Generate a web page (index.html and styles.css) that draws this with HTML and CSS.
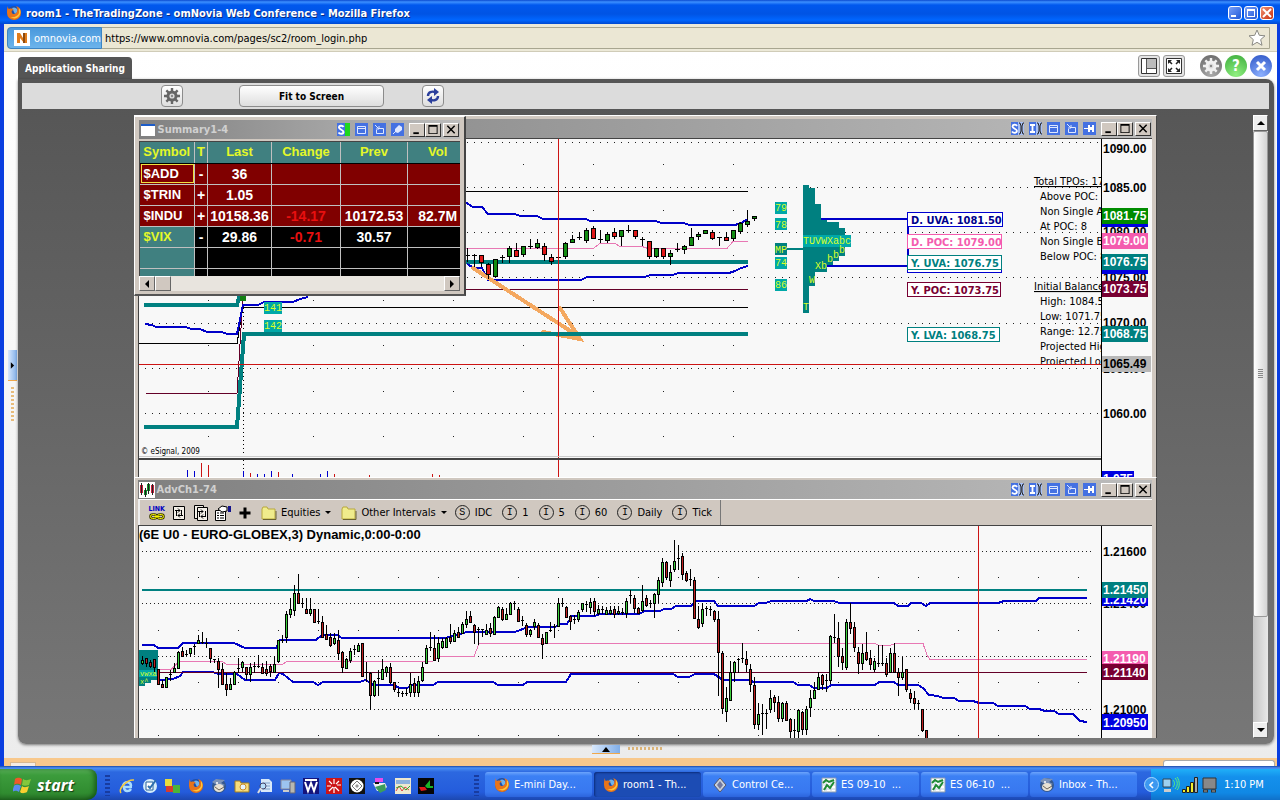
FILE: index.html
```html
<!DOCTYPE html>
<html lang="en">
<head>
    <meta charset="UTF-8">
    <meta name="viewport" content="width=device-width, initial-scale=1.0">
    <title>room1 - TheTradingZone - omNovia Web Conference</title>
    <link rel="stylesheet" href="styles.css">
</head>
<body>
    <!-- shared icons -->
    <svg class="defs" aria-hidden="true">
        <symbol id="i-firefox" viewBox="0 0 16 16">
            <circle cx="8" cy="8" r="7" fill="#1f4fa8"/>
            <path d="M6 3a4 4 0 0 1 5 1 4 4 0 0 1-2 5z" fill="#6fb4ee"/>
            <path d="M2 1c0 2 0 2 1 3 2-1 4 0 5 1-2 0-3 1-2 3 1 2 4 1 5-1 1-3 0-5-1-6 3 1 5 3 5 7a7 7 0 0 1-14 0c0-3 0-5 1-7z" fill="#e8741a"/>
            <path d="M13 3c2 2 2 6 0 8-2 3-6 3-9 1 4 1 8-1 9-4z" fill="#ffc83a"/>
        </symbol>
        <symbol id="i-gear" viewBox="0 0 16 16">
            <g fill="currentColor">
                <circle cx="8" cy="8" r="5.5"/>
                <path d="M6.8 0h2.4v16H6.8zM0 6.8h16v2.4H0zM1.5 3.2l1.7-1.7 11.3 11.3-1.7 1.7zM12.8 1.5l1.7 1.7L3.2 14.5l-1.7-1.7z"/>
            </g>
            <circle cx="8" cy="8" r="2.6" fill="#ddd"/>
            <circle cx="8" cy="8" r="1.2" fill="#888"/>
        </symbol>
        <symbol id="i-chart" viewBox="0 0 16 16">
            <path d="M1 1h14v14H1z" fill="#fff" stroke="#8a9ab0"/>
            <path d="M1 4h14M1 8h14M1 12h14M5 1v14M10 1v14" stroke="#c4d0dc"/>
            <path d="M2 6l3-3 3 2 5-2M3 13l3-5 3 3 4-6" fill="none" stroke="#1d8a34" stroke-width="2"/>
        </symbol>
        <symbol id="i-bird" viewBox="0 0 16 16">
            <circle cx="8" cy="8" r="7" fill="#35588e"/>
            <path d="M1 4l4-3 9 1-4 3 4 2-5 2z" fill="#7c93b8"/>
            <ellipse cx="8" cy="10" rx="5" ry="4" fill="#e8e2d4"/>
            <path d="M4 9l4 3 5-3" fill="none" stroke="#6c655a"/>
            <circle cx="6" cy="5" r="1" fill="#fff"/>
        </symbol>
        <symbol id="w-s" viewBox="0 0 13 13">
            <path d="M0 0h13v13H0z" fill="#a8c0f4"/>
            <path d="M0 0h7v13H0z" fill="#4471e2"/>
            <path d="M6 4C5 2 1.500 2.500 1.500 4.500S6 7 6 9 2.500 11.500 1 9.500" fill="none" stroke="#fff" stroke-width="1.800"/>
            <path d="M8 1h1l1 3v5l-1 3H8M13 1h-1l-1 3v5l1 3h1" fill="none" stroke="#222"/>
        </symbol>
        <symbol id="w-i" viewBox="0 0 13 13">
            <path d="M0 0h13v13H0z" fill="#a8c0f4"/>
            <path d="M0 0h7v13H0z" fill="#4471e2"/>
            <path d="M1 3h5M1 10h5M3.500 3v7" fill="none" stroke="#fff" stroke-width="1.800"/>
            <path d="M8 1h1l1 3v5l-1 3H8M13 1h-1l-1 3v5l1 3h1" fill="none" stroke="#222"/>
        </symbol>
        <symbol id="w-sg" viewBox="0 0 13 13">
            <path d="M0 0h8v13H0z" fill="#4471e2"/>
            <path d="M6.500 4C5.500 2 2 2.500 2 4.500S6.500 7 6.500 9 3 11.500 1.500 9.500" fill="none" stroke="#fff" stroke-width="2"/>
            <path d="M8 0h5v13H8z" fill="#1ed61e"/>
        </symbol>
        <symbol id="w-box" viewBox="0 0 13 13">
            <path d="M0 0h13v13H0z" fill="#4471e2"/>
            <path d="M2.500 3.500h8v7h-8z" fill="none" stroke="#dfe8ff"/>
            <path d="M2 5.500h9" stroke="#dfe8ff"/>
        </symbol>
        <symbol id="w-pop" viewBox="0 0 13 13">
            <path d="M0 0h13v13H0z" fill="#4471e2"/>
            <path d="M5 5.500h5.500v5h-7V7M2 2l4 4M6 3v3H3" fill="none" stroke="#dfe8ff"/>
        </symbol>
        <symbol id="w-pin" viewBox="0 0 13 13">
            <path d="M0 0h13v13H0z" fill="#4471e2"/>
            <path d="M1 6.500h5" stroke="#fff"/>
            <path d="M5 3h2v2h2V3h2v7H9V8H7v2H5z" fill="#fff"/>
        </symbol>
        <symbol id="w-pin2" viewBox="0 0 13 13">
            <path d="M0 0h13v13H0z" fill="#4471e2"/>
            <path d="M2 11l3-3" stroke="#dfe8ff"/>
            <path d="M4 6l4-4 3 2v3l-4 3-3-1z" fill="#dfe8ff"/>
        </symbol>
        <symbol id="w-min" viewBox="0 0 12 12"><path d="M2 9h6v2H2z"/></symbol>
        <symbol id="w-max" viewBox="0 0 12 12"><path d="M1 1h10v10H1zM2 3v7h8V3z" fill-rule="evenodd"/></symbol>
        <symbol id="w-close" viewBox="0 0 12 12"><path d="M2 2l8 8M10 2l-8 8" stroke="#000" stroke-width="1.600"/></symbol>
        <symbol id="i-folder" viewBox="0 0 16 14">
            <path d="M1 3l1-2h4l1 2h7v10H1z" fill="#f0ec8c" stroke="#b8a83c"/>
            <path d="M2 13.500h13V5" fill="none" stroke="#6a6230"/>
        </symbol>
    </svg>

    <div class="browser">
        <header class="titlebar">
            <svg class="ico16"><use href="#i-firefox"/></svg>
            <h1>room1 - TheTradingZone - omNovia Web Conference - Mozilla Firefox</h1>
            <div class="xp-buttons">
                <button type="button" aria-label="Minimize"><svg viewBox="0 0 10 10"><path d="M1 7h5v2H1z"/></svg></button>
                <button type="button" aria-label="Maximize"><svg viewBox="0 0 10 10"><path d="M1 1h8v8H1zM2 3v5h6V3z" fill-rule="evenodd"/></svg></button>
                <button type="button" class="close" aria-label="Close"><svg viewBox="0 0 10 10"><path d="M1 1l8 8M9 1L1 9" stroke="#fff" stroke-width="2"/></svg></button>
            </div>
        </header>

        <div class="addressbar">
            <div class="url-box">
                <span class="site-id">
                    <svg viewBox="0 0 16 16"><path d="M0 0h16v16H0z" fill="#fff"/><path d="M3 13V3h3l3 5V3h4v10h-3L6 8v5z" fill="#e07c1c"/><path d="M9 3h2v10H9z" fill="#8c4a10"/></svg>
                    omnovia.com
                </span>
                <input type="text" class="url" aria-label="Address" value="https://www.omnovia.com/pages/sc2/room_login.php">
                <svg class="star" viewBox="0 0 18 18"><path d="M9 1l2.300 5.300 5.700.500-4.300 3.800 1.300 5.700L9 13.300l-5 3 1.300-5.700L1 6.800l5.700-.500z" fill="#fff" stroke="#8a8a84"/></svg>
            </div>
        </div>

        <main class="room">
            <div class="room-head">
                <span class="tab">Application Sharing</span>
                <div class="room-tools">
                    <button type="button" class="sq" aria-label="Layout"><svg viewBox="0 0 16 16"><path d="M.500.500h15v15H.500z" fill="#fff" stroke="#333"/><path d="M6 1h9v9H6z" fill="#bbb"/><path d="M5.500 1v14M6 10.500h9" stroke="#555"/></svg></button>
                    <button type="button" class="sq" aria-label="Full screen"><svg viewBox="0 0 16 16"><path d="M.500.500h15v15H.500z" fill="#fff" stroke="#333"/><path d="M2 2h4L2 6zM14 2h-4l4 4zM2 14h4l-4-4zM14 14h-4l4-4z" fill="#222"/><path d="M3 3l3 3M13 3l-3 3M3 13l3-3M13 13l-3-3" stroke="#222" stroke-width="1.500"/></svg></button>
                    <button type="button" class="round gray" aria-label="Settings"><svg viewBox="0 0 16 16"><use href="#i-gear"/></svg></button>
                    <button type="button" class="round green" aria-label="Help">?</button>
                    <button type="button" class="round blue" aria-label="Exit"><svg viewBox="0 0 16 16"><path d="M4 4l8 8M12 4l-8 8" stroke="#fff" stroke-width="3"/></svg></button>
                </div>
            </div>

            <div class="side-split">
                <button type="button" aria-label="Expand sidebar"><svg viewBox="0 0 6 8"><path d="M1 0l4 4-4 4z"/></svg></button>
                <i></i>
            </div>

            <section class="panel">
                <div class="share-bar">
                    <button type="button" class="small" aria-label="Sharing options"><svg viewBox="0 0 16 16"><use href="#i-gear"/></svg></button>
                    <button type="button" class="fit">Fit to Screen</button>
                    <button type="button" class="small" aria-label="Refresh"><svg viewBox="0 0 16 16" fill="none" stroke="#2b3f9c" stroke-width="2.400"><path d="M3 8c0-4 4-5 7-4M13 8c0 4-4 5-7 4"/><path d="M9 0l5 4-5 4zM7 16l-5-4 5-4z" fill="#2b3f9c" stroke="none"/></svg></button>
                </div>

                <div class="share-area">
                    <div class="desktop">
                        <article class="win win-main">
                            <div class="win-title">
                                <span class="win-name"></span>
                                <span class="win-icons">
                                    <svg><use href="#w-s"/></svg><svg><use href="#w-i"/></svg><svg><use href="#w-box"/></svg><svg><use href="#w-pop"/></svg><svg><use href="#w-pin"/></svg>
                                </span>
                                <span class="win-ctl">
                                    <button type="button" aria-label="Minimize"><svg><use href="#w-min"/></svg></button><button type="button" aria-label="Maximize"><svg><use href="#w-max"/></svg></button><button type="button" aria-label="Close"><svg><use href="#w-close"/></svg></button>
                                </span>
                            </div>
                            <svg class="chart" viewBox="139 139 1013 338" width="1013" height="338">
                                <g class="dots" id="grid-es"></g>
                                <path class="vdots" d="M243.500 296v181"/>
                                <g class="note" clip-path="url(#note-clip)">
                                    <text x="1034" y="185" text-decoration="underline">Total TPOs: 178</text>
                                    <text x="1040" y="200">Above POC: 83</text>
                                    <text x="1040" y="215">Non Single Above: 70</text>
                                    <text x="1040" y="230">At POC: 8</text>
                                    <text x="1040" y="245">Non Single Below: 75</text>
                                    <text x="1040" y="260">Below POC: 87</text>
                                    <text x="1034" y="290" text-decoration="underline">Initial Balance</text>
                                    <text x="1040" y="305">High: 1084.50</text>
                                    <text x="1040" y="320">Low: 1071.75</text>
                                    <text x="1040" y="335">Range: 12.75</text>
                                    <text x="1040" y="350">Projected High</text>
                                    <text x="1040" y="365">Projected Low</text>
                                </g>
                                <clipPath id="note-clip"><path d="M1000 139h101v225h-101z"/></clipPath>
                                <path class="ln black" d="M465 191.500h283M139 343.500h98l6-36h505"/>
                                <path class="ln maroon" d="M465 289.500h283M146 393.500h91l6-98"/>
                                <path class="ln pink" d="M465 248.500H593L600 243.500H615L620 246.500H642L648 248.500H727L733 241.500H748"/>
                                <path class="ln teal4" d="M144 305h93l4-15M465 262h283M144 427h93l7-93h504"/>
                                <path class="ln blue" d="M145 324L152 325 156 327H185L192 329H200L207 332H222L227 334H237L243 305H258L264 302H293L300 299 308 297"/>
                                <path class="ln blue" d="M465 202L473 207H482L488 214H515L520 216H537L543 219H586L590 221H656L661 223H684L689 225H735L741 223 748 219"/>
                                <path class="ln blue" d="M467 264L474 268H482L488 280H581L587 277H645L650 275H673L678 273H729L735 271 741 268 748 266"/>
                                <path class="arrow" d="M473 268L575 334M560 308L580 339 543 332"/>
                                <path class="ln teal4" d="M540 334h60"/>
                                <path d="M240 290h6v11h-6z" fill="#128012"/>
                                <g id="candles-es"></g>
                                <path class="ln red" d="M139 364.500h962M558.500 139v338"/>

                                <g class="tpo">
                                    <path d="M775 202h12v12h-12zM775 218h12v12h-12zM775 257h12v12h-12zM775 279h12v12h-12zM264 302h18v12h-18zM264 320h18v12h-18z" fill="#00a8a8"/>
                                    <path d="M775 243h12v12h-12zM787 248h16v2h-16z" fill="#008080"/>
                                    <path d="M803 185H809V188H815V204H821V219H827V222H839V228H845V256H839V261H833V267H827V272H815V286H809V313H803z" fill="#008080"/>
                                    <path d="M803 235h48v12h-48z" fill="#00a8a8"/>
                                    <text x="775" y="211">79</text><text x="775" y="228">78</text><text x="775" y="253">MP</text>
                                    <text x="775" y="266">74</text><text x="775" y="288">86</text>
                                    <text x="264" y="311">141</text><text x="264" y="329">142</text>
                                    <text x="803" y="244">TUVWXabc</text>
                                    <text x="839" y="253">b</text><text x="833" y="258">b</text><text x="827" y="262">b</text>
                                    <text x="815" y="269">Xb</text><text x="809" y="283">W</text><text x="803" y="310">T</text>
                                </g>

                                <path class="ln blue" d="M821 219H908V273M827 266H908"/>
                                <g class="level">
                                    <path d="M907.500 258.500h94v14h-94z" stroke="#0000d0"/>
                                    <path d="M907.500 212.500h95v14h-95z" stroke="#0000d0"/><text x="911" y="224" fill="#00008c">D. UVA: 1081.50</text>
                                    <path d="M907.500 234.500h94v14h-94z" stroke="#f45cae"/><text x="911" y="246" fill="#f45cae">D. POC: 1079.00</text>
                                    <path d="M907.500 255.500h94v14h-94z" stroke="#008080"/><text x="911" y="267" fill="#008080">Y. UVA: 1076.75</text>
                                    <path d="M907.500 282.500h93v14h-93z" stroke="#780032"/><text x="911" y="294" fill="#780032">Y. POC: 1073.75</text>
                                    <path d="M907.500 327.500h92v14h-92z" stroke="#008080"/><text x="911" y="339" fill="#008080">Y. LVA: 1068.75</text>
                                </g>

                                <text class="copy" x="141" y="454">© eSignal, 2009</text>
                                <path d="M139 456.500h962" stroke="#ccc"/>
                                <path d="M139 459h962" stroke="#444" stroke-width="2"/>
                                <path class="ln red" d="M201.500 463v14M208.500 465v12M250.500 473v4M278.500 472v5M334.500 474v3M369.500 475v2M432.500 474v3M439.500 475v2"/>
                                <path d="M187.500 470v7M194.500 471v6M243.500 471v6M257.500 474v3M264.500 474v3M271.500 471v6M292.500 474v3M320.500 474v3M327.500 471v6" stroke="#0000d0"/>

                                <path d="M1101.500 139v338" stroke="#000"/>
                                <g class="axis">
                                    <text x="1103" y="153">1090.00</text>
                                    <text x="1103" y="192">1085.00</text>
                                    <text x="1103" y="236">1080.00</text>
                                    <text x="1103" y="282">1075.00</text>
                                    <text x="1103" y="327">1070.00</text>
                                    <text x="1103" y="373">1065.00</text>
                                    <text x="1103" y="418">1060.00</text>
                                    <g class="tag">
                                        <path d="M1102 224h46v3h-46zM1102 268h46v6h-46zM1102 471h32v6h-32z" fill="#0000e0"/>
                                        <path d="M1102 208h46v16h-46z" fill="#008c00"/><text x="1103" y="220">1081.75</text>
                                        <path d="M1102 233h46v16h-46z" fill="#f45cae"/><text x="1103" y="245">1079.00</text>
                                        <path d="M1102 254h46v16h-46z" fill="#008080"/><text x="1103" y="266">1076.75</text>
                                        <path d="M1102 281h46v16h-46z" fill="#780032"/><text x="1103" y="293">1073.75</text>
                                        <path d="M1102 326h46v16h-46z" fill="#008080"/><text x="1103" y="338">1068.75</text>
                                        <text x="1103" y="483">1.075</text>
                                    </g>
                                    <path d="M1102 356h49v16h-49z" fill="#b8b8b8"/><text x="1103" y="368">1065.49</text>
                                </g>
                            </svg>
                        </article>

                        <article class="win win-adv">
                            <div class="win-title">
                                <svg class="app" viewBox="0 0 16 16"><path d="M0 0h16v16H0z" fill="#fff"/><path d="M1 3h3v8H1zM12 3h3v8h-3z" fill="#c81e3c"/><path d="M5 8h3v5H5zM8 2h3v7H8z" fill="#118a2a"/><path d="M2.500 1v12M6.500 6v9M9.500 1v11M13.500 2v11" stroke="#222"/></svg>
                                <span class="win-name">AdvCh1-74</span>
                                <span class="win-icons">
                                    <svg><use href="#w-s"/></svg><svg><use href="#w-i"/></svg><svg><use href="#w-box"/></svg><svg><use href="#w-pop"/></svg><svg><use href="#w-pin"/></svg>
                                </span>
                                <span class="win-ctl">
                                    <button type="button" aria-label="Minimize"><svg><use href="#w-min"/></svg></button><button type="button" aria-label="Maximize"><svg><use href="#w-max"/></svg></button><button type="button" aria-label="Close"><svg><use href="#w-close"/></svg></button>
                                </span>
                            </div>
                            <div class="chart-tools">
                                <button type="button" class="link-btn"><b>LINK</b><svg viewBox="0 0 16 7" fill="none"><g stroke="#3c3c00" stroke-width="2.600"><rect x="1.500" y="1.500" width="6" height="4" rx="2"/><rect x="8.500" y="1.500" width="6" height="4" rx="2"/></g><g stroke="#f4f000"><rect x="1.500" y="1.500" width="6" height="4" rx="2"/><rect x="8.500" y="1.500" width="6" height="4" rx="2"/><path d="M5 3.500h6"/></g></svg></button>
                                <button type="button" aria-label="Swap symbol"><svg viewBox="0 0 16 16" fill="none" stroke="#000"><path d="M2.500 1.500h11v13h-11z" fill="#f4f0e8"/><path d="M4 5.500h5M7 3.500l2 2-2 2M12 10.500H7M9 8.500l-2 2 2 2M5.500 6v5M10.500 5v5"/></svg></button>
                                <button type="button" aria-label="Swap all"><svg viewBox="0 0 16 16" fill="none" stroke="#000"><path d="M1.500.500h9v13h-9z" fill="#f4f0e8"/><path d="M4.500 2.500h10v13h-10z" fill="#f4f0e8"/><path d="M5 6.500h5M8 4.500l2 2-2 2M13 11.500H8M10 9.500l-2 2 2 2M6.500 7v5M12.500 6v5"/></svg></button>
                                <button type="button" aria-label="Properties"><svg viewBox="0 0 16 16"><path d="M.500 5.500h10v10H.500z" fill="#fff" stroke="#000"/><path d="M2 8h2M5 8h4M2 10.500h2M5 10.500h4M2 13h2M5 13h4" stroke="#000"/><path d="M3 4l4-3 5 1v4l-5 1z" fill="#fff" stroke="#000"/><path d="M13 1h3v6h-3z" fill="#14148c"/></svg></button>
                                <button type="button" aria-label="Add"><svg viewBox="0 0 16 16"><path d="M6.500 2.500h3v4h4v3h-4v4h-3v-4h-4v-3h4z"/></svg></button>
                                <button type="button" class="menu"><svg class="fold"><use href="#i-folder"/></svg>Equities<i></i></button>
                                <button type="button" class="menu"><svg class="fold"><use href="#i-folder"/></svg>Other Intervals<i></i></button>
                                <button type="button" class="iv"><em>S</em>IDC</button>
                                <button type="button" class="iv"><em>I</em>1</button>
                                <button type="button" class="iv"><em>I</em>5</button>
                                <button type="button" class="iv"><em>I</em>60</button>
                                <button type="button" class="iv"><em>I</em>Daily</button>
                                <button type="button" class="iv last"><em>I</em>Tick</button>
                            </div>
                            <svg class="chart" viewBox="139 526 1013 212" width="1013" height="212">
                                <g class="dots" id="grid-euro"></g>
                                <path d="M139 650h19v20h-19z" fill="#008080"/>
                                <path d="M139 670h19v7h-19z" fill="#00a8a8"/>
                                <path d="M139 677h19v3h-7v3h-6v3h-6z" fill="#008080"/>
                                <text class="tiny" x="140" y="676">vwxa</text><text class="tiny" x="140" y="684">x^</text>
                                <path class="ln teal2" d="M142 590h945"/>
                                <path class="ln pink" d="M158 669.500H171L179 661.500H222L227 664.500H282L287 661.500H432L440 656.500H474L479 643.500H875L879 645.500H890L895 643.500H923L927 655 930 659.500H1087"/>
                                <path class="ln blue" d="M158 680L173 679 180 676 183 672H213L218 674H237L245 680H275L279 673 283 674 293 682H313L318 685 323 682H360L365 680 369 682 373 685H393L400 688H407L413 685H433L438 682H493L498 685H523L527 682H566L571 674H673L678 677H689L695 674H714L723 680H748L754 682H793L798 685H809L814 688H827L831 685H875L879 682H894L898 685H918L923 688 929 695 938 696 943 698H954L959 701H973L979 703H993L998 706H1025L1030 709H1039L1045 711H1054L1059 714H1073L1080 721 1087 722"/>
                                <path class="ln blue" d="M142 645H154L158 648H178L183 643H234L245 648H276L280 640H316L322 635H337L342 638H445L467 632H515L528 627H555L560 624H567L572 616H595L600 614H639L645 611H660L664 609H671L676 606H691L696 601H714L718 606H754L759 603H766L771 601H807L810 599 814 601H834L839 603H894L898 606H908L911 603H921L926 606 930 603H998L1004 601H1036L1039 598H1087"/>
                                <path class="ln maroon" d="M158 672.500h929"/>
                                <g id="candles-euro"></g>
                                <path class="ln red" d="M978.500 526v212"/>
                                <text class="chart-name" x="139" y="539">(6E U0 - EURO-GLOBEX,3) Dynamic,0:00-0:00</text>
                                <path d="M1101.500 526v212" stroke="#000"/>
                                <g class="axis">
                                    <text x="1103" y="556">1.21600</text>
                                    <text x="1103" y="608">1.21400</text>
                                    <text x="1103" y="714">1.21000</text>
                                    <g class="tag">
                                        <path d="M1102 590h46v16h-46z" fill="#0000e0"/><text x="1103" y="604">1.21420</text>
                                        <path d="M1102 582h46v16h-46z" fill="#008080"/><text x="1103" y="594">1.21450</text>
                                        <path d="M1102 651h46v16h-46z" fill="#f45cae"/><text x="1103" y="663">1.21190</text>
                                        <path d="M1102 664h46v16h-46z" fill="#780032"/><text x="1103" y="677">1.21140</text>
                                        <path d="M1102 714h46v16h-46z" fill="#0000e0"/><text x="1103" y="727">1.20950</text>
                                    </g>
                                </g>
                            </svg>
                        </article>

                        <article class="win summary">
                            <div class="win-title">
                                <svg class="app" viewBox="0 0 16 16"><path d="M1 3h14v11H1z" fill="#fff"/><path d="M1 2h14v2H1z" fill="#1c5cc8"/></svg>
                                <span class="win-name">Summary1-4</span>
                                <span class="win-icons">
                                    <svg><use href="#w-sg"/></svg><svg><use href="#w-box"/></svg><svg><use href="#w-pop"/></svg><svg><use href="#w-pin2"/></svg>
                                </span>
                                <span class="win-ctl">
                                    <button type="button" aria-label="Minimize"><svg><use href="#w-min"/></svg></button><button type="button" aria-label="Maximize"><svg><use href="#w-max"/></svg></button><button type="button" aria-label="Close"><svg><use href="#w-close"/></svg></button>
                                </span>
                            </div>
                            <div class="table-box">
                                <table>
                                    <thead>
                                        <tr><th>Symbol</th><th>T</th><th>Last</th><th>Change</th><th>Prev</th><th>Vol</th></tr>
                                    </thead>
                                    <tbody>
                                        <tr class="hot"><td class="sel">$ADD</td><td>-</td><td>36</td><td></td><td></td><td></td></tr>
                                        <tr class="hot"><td>$TRIN</td><td>+</td><td>1.05</td><td></td><td></td><td></td></tr>
                                        <tr class="hot"><td>$INDU</td><td>+</td><td>10158.36</td><td class="neg">-14.17</td><td>10172.53</td><td>82.7M</td></tr>
                                        <tr><td>$VIX</td><td>-</td><td>29.86</td><td class="neg">-0.71</td><td>30.57</td><td></td></tr>
                                        <tr><td></td><td></td><td></td><td></td><td></td><td></td></tr>
                                        <tr><td></td><td></td><td></td><td></td><td></td><td></td></tr>
                                    </tbody>
                                </table>
                            </div>
                            <div class="hscroll">
                                <button type="button" aria-label="Scroll left"><svg viewBox="0 0 8 8"><path d="M6 0v8L2 4z"/></svg></button>
                                <span class="knob"></span>
                                <button type="button" aria-label="Scroll right"><svg viewBox="0 0 8 8"><path d="M2 0v8l4-4z"/></svg></button>
                            </div>
                        </article>
                    </div>

                    <div class="vscroll">
                        <button type="button" aria-label="Scroll up"><svg viewBox="0 0 8 8"><path d="M0 6h8L4 2z"/></svg></button>
                        <span class="knob"><i></i></span>
                        <button type="button" aria-label="Scroll down"><svg viewBox="0 0 8 8"><path d="M0 2h8L4 6z"/></svg></button>
                    </div>
                </div>
            </section>

            <div class="bottom-split">
                <button type="button" aria-label="Expand panel"><svg viewBox="0 0 8 5"><path d="M0 5h8L4 0z"/></svg></button>
                <i></i>
            </div>
        </main>
        <div class="statusbar"><span class="left-box"></span><span class="right-box"></span></div>
    </div>

    <footer class="taskbar">
        <button type="button" class="start">
            <svg viewBox="0 0 20 18"><path d="M2 3c3-2 5-1 7 0L8 9C6 8 4 7 1 9z" fill="#f0582a"/><path d="M10 3c3 2 5 1 8 0l-2 6c-3 1-5 1-7 0z" fill="#84c83c"/><path d="M1 10c2-2 5-1 7 0l-2 6c-2-1-4-2-7 0z" fill="#5a8cf0"/><path d="M9 10c2 2 5 1 7 0l-2 6c-2 1-5 2-7 0z" fill="#f8d030"/></svg>
            start
        </button>
        <i class="grip"></i>
        <nav class="quick">
            <svg viewBox="0 0 16 16"><path d="M13 9H5c0 5 5 5 7 2M4 8c1-5 8-5 8 0" fill="none" stroke="#a8dcff" stroke-width="2.500"/><path d="M2 15C-1 11 8 1 15 2" fill="none" stroke="#f4c83c" stroke-width="1.500"/></svg>
            <svg viewBox="0 0 16 16"><circle cx="8" cy="8" r="7" fill="#d4ecfa"/><path d="M4 4h7v8H4z" fill="#fff" stroke="#27639c"/><path d="M6 8l2 2 6-8" fill="none" stroke="#2d6fae" stroke-width="2"/></svg>
            <svg viewBox="0 0 16 16"><path d="M0 1h7v7H0z" fill="#e8dc3c"/><path d="M7 0h7v7H7z" fill="#2c62dc"/><path d="M1 8h7v6H1z" fill="#d83c2c"/><path d="M8 7h7v8H8z" fill="#4ab43c"/></svg>
            <svg><use href="#i-firefox"/></svg>
            <svg><use href="#i-bird"/></svg>
            <svg viewBox="0 0 16 16"><path d="M1 3h5l1 2h8v9H1z" fill="#f6dc7c" stroke="#a07c20"/><circle cx="9" cy="9" r="3" fill="#e8f4fc" stroke="#c88c2c"/></svg>
            <svg viewBox="0 0 16 16"><path d="M4 1h8l3 3v10H4z" fill="#d8e8f8"/><path d="M6 5h7M6 8h7M6 11h7" stroke="#7ca0c8"/><circle cx="6" cy="8" r="3" fill="#b8e0fc" stroke="#446"/><path d="M4 10l-3 5" stroke="#ddd" stroke-width="2"/></svg>
            <svg viewBox="0 0 16 16"><path d="M1 2h10v9H1z" fill="#9cc4f0" stroke="#889"/><path d="M10 4h5v11h-5z" fill="#b8b8b0" stroke="#667"/><path d="M3 13h6" stroke="#ccc" stroke-width="2"/></svg>
            <svg viewBox="0 0 16 16"><path d="M0 0h16v16H0z" fill="#14147c"/><path d="M2 4l3 9 3-8 3 8 3-9M2 2h12" fill="none" stroke="#fff" stroke-width="2"/></svg>
            <svg viewBox="0 0 16 16"><path d="M0 0h16v16H0z" fill="#cc1418"/><path d="M8 1v5M8 9v6M1 8h4M11 7h4M3 3l3 3M13 3l-3 3M3 13l4-4M13 13l-4-4" stroke="#fff" stroke-width="1.200"/></svg>
            <svg viewBox="0 0 16 16"><path d="M0 0h16v16H0z" fill="#111"/><circle cx="8" cy="8" r="6.500" fill="#fff"/><path d="M8 3l5 5-5 5-5-5z" fill="none" stroke="#777"/><path d="M8 6l2 2-2 2-2-2z" fill="#999"/></svg>
            <svg viewBox="0 0 16 16"><path d="M3 0h8v4H3z" fill="#e84ce8"/><path d="M1 5h12l2 4-4 4H5z" fill="#f0f0f0"/><path d="M3 9l10-3 1 6-6 3z" fill="#3c9c5c"/><path d="M3 5h4" stroke="#111" stroke-width="2"/></svg>
            <svg viewBox="0 0 16 16"><path d="M0 0h16v16H0z" fill="#eee8d0"/><path d="M1 2h14v4H1z" fill="#8cb0dc"/><path d="M1 13l3-5 3 5 3-4 4 3" stroke="#d44" fill="none"/><path d="M1 10l5-2 5 4 4-4" stroke="#3a3" fill="none"/></svg>
            <svg viewBox="0 0 16 16"><path d="M0 0h16v16H0z" fill="#050505"/><path d="M7 8l5-6v6h3v2H9z" fill="#18b428"/><path d="M1 9h6l2 3-6 1z" fill="#e01818"/></svg>
        </nav>
        <i class="grip"></i>
        <div class="tasks">
            <button type="button"><svg><use href="#i-firefox"/></svg>E-mini Day...</button>
            <button type="button" class="active"><svg><use href="#i-firefox"/></svg>room1 - Th...</button>
            <button type="button"><svg viewBox="0 0 16 16"><path d="M8 1l6 7-6 7-6-7z" fill="#c8d0dc" stroke="#556"/><path d="M8 4l3 4-3 4-3-4z" fill="#7078a0"/></svg>Control Ce...</button>
            <button type="button"><svg><use href="#i-chart"/></svg>ES 09-10 &nbsp;...</button>
            <button type="button"><svg><use href="#i-chart"/></svg>ES 06-10 &nbsp;...</button>
            <button type="button"><svg><use href="#i-bird"/></svg>Inbox - Th...</button>
        </div>
        <div class="tray">
            <button type="button" class="chev" aria-label="Show hidden icons"><svg viewBox="0 0 8 8"><path d="M5 1L2 4l3 3" fill="none" stroke="#fff" stroke-width="1.600"/></svg></button>
            <svg viewBox="0 0 18 18"><path d="M1 3h8v8H1z" fill="#9cd0f0" stroke="#345"/><path d="M2 13h7v3H2z" fill="#ccc"/><path d="M11 4c2 2 2 5 0 7M13 2c3 3 3 8 0 11M15 1c3 4 3 10 0 13" fill="none" stroke="#5cf07c"/></svg>
            <svg viewBox="0 0 18 18" fill="#f4f02c" stroke="#222"><path d="M1.500 13.500h3v3h-3zM5.500 10.500h3v6h-3zM9.500 6.500h3v10h-3z"/><path d="M13.500 1.500h3v15h-3z" fill="#aaa"/></svg>
            <svg viewBox="0 0 18 18"><path d="M3 2h13v11H3z" fill="#888" stroke="#333"/><path d="M3 15h5M11 15h5" stroke="#333" stroke-width="3"/><path d="M4 15h3M12 15h3" stroke="#aaa"/></svg>
            <time>1:10 PM</time>
        </div>
    </footer>

    <script src="chart.js"></script>
</body>
</html>
```

FILE: styles.css
```css
* {
    box-sizing: border-box;
}
body {
    margin: 0;
    height: 100vh;
    display: flex;
    flex-direction: column;
    overflow: hidden;
    background: #fff;
    font-family: "DejaVu Sans Condensed", "DejaVu Sans", Tahoma, sans-serif;
    font-size: 11px;
    color: #000;
}
button {
    font: inherit;
    color: inherit;
    padding: 0;
    margin: 0;
    border: 0;
    background: none;
    display: flex;
    align-items: center;
    justify-content: center;
}
svg {
    display: block;
    flex: none;
}
.defs {
    position: absolute;
    width: 0;
    height: 0;
}
.ico16 {
    width: 16px;
    height: 16px;
}

/* browser frame */
.browser {
    flex: 1;
    min-height: 0;
    display: flex;
    flex-direction: column;
    border: solid #0a3ee0;
    border-width: 0 3px 0 4px;
}
.titlebar {
    height: 24px;
    flex: none;
    display: flex;
    align-items: center;
    gap: 4px;
    margin: 0 -3px 0 -4px;
    padding: 2px 6px 0 6px;
    background: linear-gradient(#0a4ad0 0, #3c90ff 2px, #0058ee 5px, #0054e4 14px, #0066ff 20px, #0048d0 24px);
    color: #fff;
}
.titlebar h1 {
    flex: 1;
    margin: 0;
    font-size: 11px;
    font-weight: bold;
    text-shadow: 1px 1px 0 #0a2a80;
}
.xp-buttons {
    display: flex;
    gap: 2px;
}
.xp-buttons button {
    width: 14px;
    height: 14px;
    border: 1px solid #fff;
    border-radius: 3px;
    background: linear-gradient(135deg, #7aa0f8, #2058d8);
}
.xp-buttons .close {
    background: linear-gradient(135deg, #f09070, #c83010);
}
.xp-buttons svg {
    width: 10px;
    height: 10px;
    fill: #fff;
}
.addressbar {
    flex: none;
    height: 28px;
    padding: 3px 7px 3px 3px;
    background: #ece9d8;
    border-bottom: 1px solid #d0ccb8;
}
.url-box {
    height: 22px;
    display: flex;
    align-items: center;
    border: 1px solid #a8a690;
    border-radius: 4px 0 0 4px;
    background: #ebe7d4;
}
.site-id {
    align-self: stretch;
    width: 95px;
    margin: -1px 0 -1px -1px;
    padding-left: 6px;
    display: flex;
    align-items: center;
    gap: 4px;
    border-radius: 4px 0 0 4px;
    background: linear-gradient(#4a98dc, #6cb4ec);
    border: 1px solid #3c84c4;
    color: #fff;
}
.site-id svg {
    width: 16px;
    height: 16px;
}
.url {
    flex: 1;
    border: 0;
    padding: 0 3px;
    background: none;
    font: inherit;
    outline: 0;
}
.star {
    width: 18px;
    height: 18px;
    margin-right: 3px;
}

/* conference room */
.room {
    flex: 1;
    min-height: 0;
    display: grid;
    grid-template: 27px minmax(0, 1fr) 14px / 14px minmax(0, 1fr);
    padding-right: 3px;
    background: linear-gradient(#fff, #ececec);
}
.room-head {
    grid-column: 2;
    display: flex;
    justify-content: space-between;
    align-items: flex-end;
}
.tab {
    height: 22px;
    line-height: 23px;
    padding: 0 7px;
    border-radius: 4px 4px 0 0;
    background: #555;
    color: #fff;
    font-size: 10px;
    font-weight: bold;
}
.room-tools {
    display: flex;
    gap: 3px;
    padding: 0 2px 2px 0;
}
.room-tools .sq {
    width: 22px;
    height: 22px;
    border: 1px solid #999;
    border-radius: 3px;
    background: #e4e4e4;
}
.sq svg,
.round svg {
    width: 16px;
    height: 16px;
}
.round {
    width: 22px;
    height: 22px;
    border-radius: 50%;
    color: #fff;
    font-size: 15px;
    font-weight: bold;
}
.round.gray {
    margin-left: 12px;
    background: radial-gradient(circle at 50% 90%, #aaa, #666);
    color: #f0f0f0;
}
.round.green {
    background: radial-gradient(circle at 50% 90%, #90f080, #3cac3c);
}
.round.blue {
    background: radial-gradient(circle at 50% 90%, #8cb0ff, #2c54c4);
}
.side-split {
    grid-row: 2;
    grid-column: 1;
    padding: 271px 0 0 4px;
}
.side-split button {
    width: 9px;
    height: 31px;
    background: linear-gradient(90deg, #d8e8fc, #80aee8);
    border-bottom: 1px solid #f0a84c;
}
.side-split svg {
    width: 5px;
    height: 7px;
}
.side-split i {
    display: block;
    width: 3px;
    height: 35px;
    margin: 6px 0 0 3px;
    background: repeating-linear-gradient(#e8bc7c 0 2px, transparent 2px 4px);
}
.bottom-split {
    grid-column: 2;
    display: flex;
    justify-content: center;
    gap: 8px;
    padding: 1px 37px 0 0;
}
.bottom-split button {
    width: 28px;
    height: 9px;
    background: linear-gradient(90deg, #d8e8fc, #80aee8);
    border-bottom: 1px solid #f0a84c;
}
.bottom-split svg {
    width: 8px;
    height: 5px;
}
.bottom-split i {
    width: 35px;
    height: 3px;
    margin-top: 2px;
    background: repeating-linear-gradient(90deg, #dcb478 0 2px, transparent 2px 4px);
}
.panel {
    grid-row: 2;
    grid-column: 2;
    display: flex;
    flex-direction: column;
    padding: 4px 4px 6px;
    border-radius: 0 8px 8px 8px;
    background: linear-gradient(#555, #777);
    box-shadow: 0 1px 3px rgba(0, 0, 0, 0.5);
}
.share-bar {
    flex: none;
    height: 26px;
    display: flex;
    align-items: center;
    padding-left: 139px;
    background: #dcdcdc;
    margin-right: 1px;
}
.share-bar button {
    height: 22px;
    border: 1px solid #8c8c8c;
    border-radius: 4px;
    background: linear-gradient(#fff, #dedede);
    font-size: 10px;
    font-weight: bold;
}
.share-bar .small {
    width: 22px;
    color: #666;
}
.share-bar .fit {
    width: 145px;
    margin: 0 38px 0 56px;
}
.share-bar svg {
    width: 16px;
    height: 16px;
}
.share-area {
    flex: 1;
    min-height: 0;
    display: grid;
    grid-template-columns: 1fr auto 1fr;
    grid-template-rows: minmax(0, 1fr);
    padding-top: 6px;
    margin-right: 2px;
}
.desktop {
    grid-column: 2;
    position: relative;
    overflow: hidden;
}

/* windows of the shared desktop */
.win {
    padding: 3px 4px 0 3px;
    border: 1px solid #fff;
    border-right-color: #444;
    border-bottom: 0;
    background: #d0c8c0;
}
.win-adv {
    padding-top: 2px;
}
.win-title {
    height: 19px;
    display: flex;
    align-items: center;
    padding-right: 1px;
    background: linear-gradient(90deg, #808080, #bcbcbc);
    color: #d0d0d0;
    font-weight: bold;
}
.win-title .app {
    width: 16px;
    height: 16px;
    margin: 0 2px 0 1px;
}
.win-name {
    flex: 1;
}
.win-icons {
    display: flex;
    gap: 5px;
    margin-right: 5px;
}
.win-icons svg {
    width: 13px;
    height: 13px;
}
.win-ctl {
    display: flex;
}
.win-ctl button {
    width: 16px;
    height: 14px;
    border: 1px solid;
    border-color: #fff #333 #333 #fff;
    background: #d0c8c0;
}
.win-ctl button:last-child {
    margin-left: 2px;
}
.win-ctl svg {
    width: 12px;
    height: 11px;
}
.chart {
    box-sizing: content-box;
    border: solid #444;
    border-width: 1px 0 0 1px;
    background: #f8f8f8;
    shape-rendering: crispEdges;
}
.chart-tools {
    height: 26px;
    display: flex;
    align-items: center;
    padding-left: 9px;
    border-top: 1px solid #fff;
    border-left: 2px solid #eee;
}
.chart-tools button {
    margin-right: 6px;
}
.chart-tools svg {
    width: 16px;
    height: 16px;
}
.chart-tools .link-btn {
    flex-direction: column;
}
.link-btn b {
    font-size: 7px;
    line-height: 7px;
    color: #0000c0;
}
.chart-tools .link-btn svg {
    height: 7px;
}
.chart-tools .menu {
    margin: 0 8px 0 2px;
    gap: 4px;
}
.chart-tools .fold {
    height: 14px;
}
.menu i {
    margin-left: 1px;
    border: 3px solid transparent;
    border-top-color: #000;
    border-bottom: 0;
}
.chart-tools .iv {
    gap: 5px;
    margin-right: 10px;
}
.iv em {
    width: 15px;
    height: 15px;
    border: 1px solid #222;
    border-radius: 50%;
    font: 10px/13px "Liberation Mono", monospace;
    text-align: center;
}
.chart-tools .last {
    align-self: stretch;
    margin: 0;
    padding-right: 8px;
    border-right: 1px solid #777;
}

/* chart drawing */
.dots path {
    stroke: #222;
}
.vdots {
    stroke: #000;
    stroke-dasharray: 1 3;
}
.ln {
    fill: none;
    stroke-width: 1;
}
.black { stroke: #000; }
.red { stroke: #cc1414; }
.maroon { stroke: #640028; }
.pink { stroke: #e878b4; }
.blue.ln { stroke: #0000c8; stroke-width: 2; }
.teal2 { stroke: #008080; stroke-width: 2; }
.teal4 { stroke: #008080; stroke-width: 4; }
.arrow {
    fill: none;
    stroke: #f4a860;
    stroke-width: 4;
    stroke-linecap: round;
}
.candle-up { fill: #128c12; stroke: #000; }
.candle-down { fill: #e01818; stroke: #000; }
.euro .candle-up { fill: #3cd03c; }
.euro .candle-down { fill: #c02020; }
.wick { stroke: #000; fill: none; }
.note {
    font-size: 11px;
}
.tpo text,
.tiny {
    font-family: "Liberation Mono", monospace;
    font-size: 10px;
    fill: #d8ff28;
}
.tiny {
    font-size: 7px;
}
.level path {
    fill: #fff;
}
.level text {
    font-size: 11px;
    font-weight: bold;
}
.copy {
    font-size: 8px;
}
.axis text,
.chart-name {
    font-family: "Liberation Sans", Arial, sans-serif;
    font-size: 12px;
    font-weight: bold;
}
.chart-name {
    font-size: 13px;
}
.axis .tag text {
    fill: #fff;
}

/* quote summary */
.summary {
    position: absolute;
    top: 1px;
    left: 0;
    width: 332px;
    height: 180px;
    padding: 3px 4px 4px 4px;
    border-bottom: 2px solid #555;
    border-right-width: 2px;
}
.table-box {
    height: 135px;
    overflow: hidden;
    margin-top: 2px;
    border: solid #444;
    border-width: 1px 0 0 1px;
    background: #000;
}
.summary table {
    width: 329px;
    table-layout: fixed;
    border-collapse: collapse;
    font-family: "Liberation Sans", Arial, sans-serif;
    font-size: 14px;
    font-weight: bold;
    color: #fff;
    background: #000;
}
.summary th,
.summary td {
    height: 21px;
    padding: 0;
    border: solid #c0c0c0;
    border-width: 0 1px 1px 0;
    text-align: center;
    line-height: 18px;
    white-space: nowrap;
}
.summary th {
    border-bottom-color: #000;
    background: #408080;
    color: #e4f828;
    font-size: 13px;
}
.summary th:nth-child(1) { width: 55px; }
.summary th:nth-child(2) { width: 13px; }
.summary th:nth-child(3) { width: 64px; }
.summary th:nth-child(4) { width: 69px; }
.summary th:nth-child(5) { width: 67px; }
.summary td:first-child {
    padding-left: 4px;
    text-align: left;
    background: #408080;
    color: #e4f828;
    font-size: 13px;
}
.summary .hot td {
    background: #800000;
}
.summary .hot td:first-child {
    color: #fff;
}
.summary .sel {
    outline: 1px solid #f0e040;
    outline-offset: -2px;
}
.summary .neg {
    color: #e81010;
}
.hscroll {
    height: 15px;
    display: flex;
    background: #e8e4de;
}
.hscroll button,
.hscroll .knob,
.vscroll button {
    width: 16px;
    border: 1px solid;
    border-color: #fff #666 #666 #fff;
    background: #d0c8c0;
}
.hscroll button:last-child {
    margin-left: auto;
}
.hscroll svg,
.vscroll svg {
    width: 8px;
    height: 8px;
}
.vscroll {
    grid-column: 3;
    justify-self: end;
    width: 15px;
    display: flex;
    flex-direction: column;
    background: linear-gradient(90deg, #c4c4c4, #e8e8e8);
}
.vscroll button {
    width: 15px;
    height: 16px;
    background: #eee;
}
.vscroll .knob {
    flex: 0 0 78%;
    margin-bottom: auto;
    display: flex;
    align-items: center;
    justify-content: center;
    border: 1px solid #999;
    border-radius: 2px;
    background: linear-gradient(90deg, #fff, #d4d4d4);
}
.vscroll i {
    width: 5px;
    height: 9px;
    background: repeating-linear-gradient(#888 0 1px, transparent 1px 2px);
}
.statusbar {
    flex: none;
    height: 8px;
    display: flex;
    justify-content: space-between;
    align-items: flex-end;
    padding: 0 2px 0 6px;
    background: #f8c88c;
}
.left-box {
    width: 26px;
    height: 4px;
    background: #f4ece4;
    border: 1px solid #d8b890;
    border-bottom: 0;
}
.right-box {
    width: 112px;
    height: 6px;
    background: #fff;
    border: 1px solid #aaa;
    border-bottom: 0;
    border-radius: 3px 3px 0 0;
}

/* taskbar */
.taskbar {
    flex: none;
    height: 34px;
    display: flex;
    align-items: stretch;
    padding-top: 3px;
    background: linear-gradient(#1c48a8 0, #4c90f4 2px, #2c68e0 6px, #245cdc 26px, #1c48b0 34px);
    color: #fff;
}
.start {
    width: 97px;
    gap: 4px;
    margin-right: 8px;
    padding-right: 10px;
    border-radius: 0 8px 10px 0;
    background: linear-gradient(#5cb45c 0, #3c9c3c 6px, #308c30 24px, #246c24);
    box-shadow: inset -3px 0 4px rgba(0, 50, 0, 0.5);
    font: italic bold 16px "Noto Sans", sans-serif;
    text-shadow: 1px 1px 1px #143c14;
}
.start svg {
    width: 20px;
    height: 18px;
}
.grip {
    width: 5px;
    margin: 6px 0 4px;
    background: repeating-linear-gradient(#183ca0 0 2px, transparent 2px 4px);
}
.quick {
    width: 364px;
    display: flex;
    align-items: center;
    gap: 7px;
    padding: 2px 0 0 9px;
}
.quick svg,
.tasks svg {
    width: 16px;
    height: 16px;
}
.tasks {
    display: flex;
    gap: 2px;
    padding: 3px 0 3px 6px;
}
.tasks button {
    width: 107px;
    justify-content: flex-start;
    gap: 4px;
    padding-left: 9px;
    border-radius: 3px;
    background: linear-gradient(#6ca4fc, #3c80f4 4px, #3878f0 20px, #2c64dc);
    white-space: nowrap;
}
.tasks .active {
    background: #1c4cb4;
    box-shadow: inset 1px 1px 2px #0c2c7c;
}
.tray {
    width: 129px;
    margin-left: auto;
    display: flex;
    align-items: center;
    gap: 1px;
    background: linear-gradient(#20b0f8, #1490ec 8px, #1088e4 24px, #1070c8);
}
.tray .chev {
    width: 15px;
    height: 15px;
    margin: 0 2px 0 -7px;
    border-radius: 50%;
    background: #3c98f0;
    border: 1px solid #a8d8ff;
}
.chev svg {
    width: 8px;
    height: 8px;
}
.tray > svg {
    width: 18px;
    height: 18px;
}
.tray time {
    margin-left: 5px;
}
```

FILE: chart.js
```js
const SVG_NS = "http://www.w3.org/2000/svg";

function addPath(parent, d, className) {
    const path = document.createElementNS(SVG_NS, "path");
    path.setAttribute("d", d);
    if (className) path.setAttribute("class", className);
    parent.appendChild(path);
    return path;
}

// dotted price rows, plus single dots halfway between them
function drawGrid(id, rows, x0, x1, step, midRows, midCols) {
    const grid = document.getElementById(id);
    rows.forEach(y => {
        addPath(grid, `M${x0} ${y}.5H${x1}`).setAttribute("stroke-dasharray", `1 ${step - 1}`);
    });
    midRows.forEach(y => {
        midCols.forEach(x => addPath(grid, `M${x} ${y}.5h1`));
    });
}

// candle: "high top bottom low type", type is g (up), r (down) or k (doji)
function drawCandles(id, data, x0, step, half, toY) {
    const group = document.getElementById(id);
    data.trim().split(/\s*,\s*/).forEach((row, i) => {
        const parts = row.split(" ");
        const [high, top, bottom, low] = parts.slice(0, 4).map(v => toY(Number(v)));
        const type = parts[4];
        const x = x0 + i * step;
        addPath(group, `M${x + 0.5} ${high}V${low}`, "wick");
        if (type === "k") {
            addPath(group, `M${x - half} ${top + 0.5}H${x + half + 1}`, "wick");
        } else {
            const h = Math.max(bottom - top, 2);
            addPath(group, `M${x - half + 0.5} ${top + 0.5}h${half * 2}v${h}h${-half * 2}z`,
                type === "g" ? "candle-up" : "candle-down");
        }
    });
}

drawGrid("grid-es", [142, 187, 232, 277, 323, 368, 413], 145, 1098, 7,
    [164, 210, 255, 300, 345, 391, 436], [208, 313, 383, 453, 523, 593, 663, 733]);

const midCols = [];
for (let x = 158; x < 1090; x += 40) midCols.push(x);
drawGrid("grid-euro", [551, 603, 656, 709], 142, 1092, 4, [577, 630, 682, 735], midCols);

drawCandles("candles-es", `
248 255 256 262 k, 254 255 256 267 k, 255 255 262 267 r, 263 264 274 279 r, 259 259 276 277 g, 255 257 258 263 k,
246 248 256 263 g, 243 250 256 257 r, 246 246 254 257 g, 239 246 247 249 k, 239 243 247 249 g, 243 246 254 261 r,
254 257 261 265 r, 256 257 258 263 k, 242 243 256 259 g, 235 239 242 243 g, 232 237 238 240 k, 228 230 240 243 g,
226 228 238 239 r, 230 239 240 243 k, 232 234 240 243 g, 228 232 236 239 r, 230 230 236 246 g, 225 230 231 232 k,
230 230 236 239 r, 237 239 240 246 k, 241 241 256 259 r, 248 248 256 258 g, 248 248 256 259 r, 250 253 256 265 g,
243 249 250 252 k, 245 246 249 254 g, 228 237 245 246 g, 232 234 236 240 g, 230 230 233 234 g, 230 232 238 240 r,
237 237 238 246 k, 232 237 240 241 r, 230 230 238 241 g, 222 223 231 234 g, 210 221 224 227 g, 216 216 218 221 g
`, 467, 7, 2, v => v);

// the euro rows are in thirds of a pixel below y = 500
drawCandles("candles-euro", `
468 480 490 495 g, 475 475 490 500 r, 480 486 498 505 r, 478 478 500 515 r, 508 508 552 552 r, 540 552 562 564 r,
530 532 562 562 g, 510 522 528 542 k, 490 505 515 515 g, 453 455 505 505 g, 440 453 467 467 r, 450 462 468 468 k,
443 445 458 470 g, 432 438 442 465 k, 405 420 430 432 g, 396 425 430 432 k, 415 428 432 445 k, 443 445 475 490 r,
478 478 483 488 k, 475 483 507 565 r, 490 507 552 555 r, 520 552 568 587 r, 535 553 568 570 g, 512 517 552 555 g,
475 505 510 518 k, 483 485 500 515 g, 500 500 522 540 r, 488 500 522 545 g, 485 497 502 518 k, 465 497 502 503 k,
490 500 518 520 r, 483 507 520 528 r, 492 498 512 530 r, 468 492 515 520 g, 420 420 483 490 g, 405 420 428 430 k,
333 342 410 428 g, 295 327 342 355 g, 255 280 330 348 g, 222 280 308 312 r, 295 308 312 325 k, 293 327 340 342 r,
295 328 340 348 g, 327 328 365 367 r, 328 363 370 372 k, 348 365 410 415 r, 375 402 418 418 r, 400 410 435 440 r,
400 413 428 435 g, 390 420 458 480 r, 453 455 500 520 r, 475 478 505 507 g, 445 453 480 490 g, 435 448 455 465 k,
430 435 452 453 g, 430 430 528 530 r, 487 517 522 545 k, 517 518 585 630 r, 540 542 585 590 g, 510 535 540 587 k,
478 507 538 540 g, 498 500 517 530 g, 490 502 547 552 r, 545 546 568 575 r, 565 577 582 590 k, 573 580 588 592 k,
565 580 586 588 k, 520 552 577 592 g, 535 550 577 592 r, 527 542 577 592 g, 485 502 540 545 g, 435 445 490 490 g,
396 440 447 452 k, 405 445 480 482 r, 410 430 475 487 g, 415 423 442 447 g, 410 415 442 443 g, 372 410 423 432 r,
390 398 423 425 g, 380 395 412 413 r, 365 372 400 402 g, 333 357 372 385 g, 333 348 367 370 r, 373 374 395 432 r,
382 388 402 435 k, 388 388 402 412 k, 373 390 402 405 g, 370 385 400 412 r, 348 350 402 402 g, 318 320 350 350 g,
320 328 357 362 r, 325 342 357 360 g, 305 310 342 343 g, 303 308 317 330 k, 320 327 363 367 r, 348 360 365 378 k,
370 375 403 412 r, 388 390 403 410 g, 358 367 378 390 g, 370 375 410 412 r, 402 413 433 477 r, 395 397 428 430 g,
365 390 395 397 k, 372 378 382 413 k, 295 310 378 380 g, 295 308 315 320 k, 318 320 350 352 r, 345 347 362 390 r,
345 357 362 373 k, 330 335 357 367 g, 308 310 327 335 g, 303 312 318 335 k, 295 305 320 342 g, 295 303 333 348 r,
315 328 340 345 g, 318 328 335 342 k, 320 330 342 345 g, 318 330 340 345 g, 318 328 342 355 r, 318 333 340 345 g,
325 337 342 345 k, 295 303 340 355 g, 270 285 293 310 k, 285 293 325 340 r, 320 325 340 342 r, 255 303 330 335 g,
285 293 315 320 r, 300 308 318 325 k, 278 283 310 355 g, 230 240 283 310 g, 173 185 245 260 g, 183 185 232 240 r,
195 215 240 260 g, 120 183 207 215 g, 135 173 183 210 k, 158 168 222 240 r, 213 220 240 245 r, 207 238 244 258 k,
230 240 355 357 r, 318 357 380 388 r, 308 327 370 380 g, 318 325 332 347 k, 318 328 333 348 k, 330 333 357 365 r,
333 357 457 587 r, 453 460 625 642 r, 562 595 632 665 g, 483 515 600 602 g, 483 485 517 545 g, 473 478 485 520 k,
430 473 480 490 k, 452 478 493 517 r, 492 507 553 575 r, 532 555 672 688 r, 608 643 672 690 g, 612 640 655 705 k,
627 640 657 688 k, 570 595 627 640 g, 585 592 607 637 r, 588 605 655 665 r, 607 610 655 665 g, 603 608 660 663 r,
655 657 692 715 r, 657 690 695 715 k, 627 630 692 715 g, 632 635 688 705 r, 618 627 688 705 g, 570 595 620 650 g,
545 570 593 595 g, 517 532 567 570 g, 523 525 552 570 r, 523 540 546 575 k, 405 407 540 553 g, 343 412 418 430 k,
365 415 468 500 r, 445 467 487 510 r, 357 367 500 510 g, 310 367 383 403 r, 365 380 442 457 r, 440 457 490 522 r,
432 460 490 510 g, 396 455 477 482 r, 450 473 492 510 r, 475 482 507 515 g, 435 488 493 500 k, 435 488 493 497 k,
475 490 522 530 r, 445 460 517 520 g, 430 460 517 520 r, 505 515 530 587 r, 470 515 530 540 g, 507 508 568 575 r,
567 580 593 610 r, 572 595 608 627 r, 600 608 618 630 k, 628 628 690 695 r, 690 690 720 720 r
`, 142, 4, 1, v => Math.round(500 + v / 3));

document.getElementById("candles-euro").classList.add("euro");
```
